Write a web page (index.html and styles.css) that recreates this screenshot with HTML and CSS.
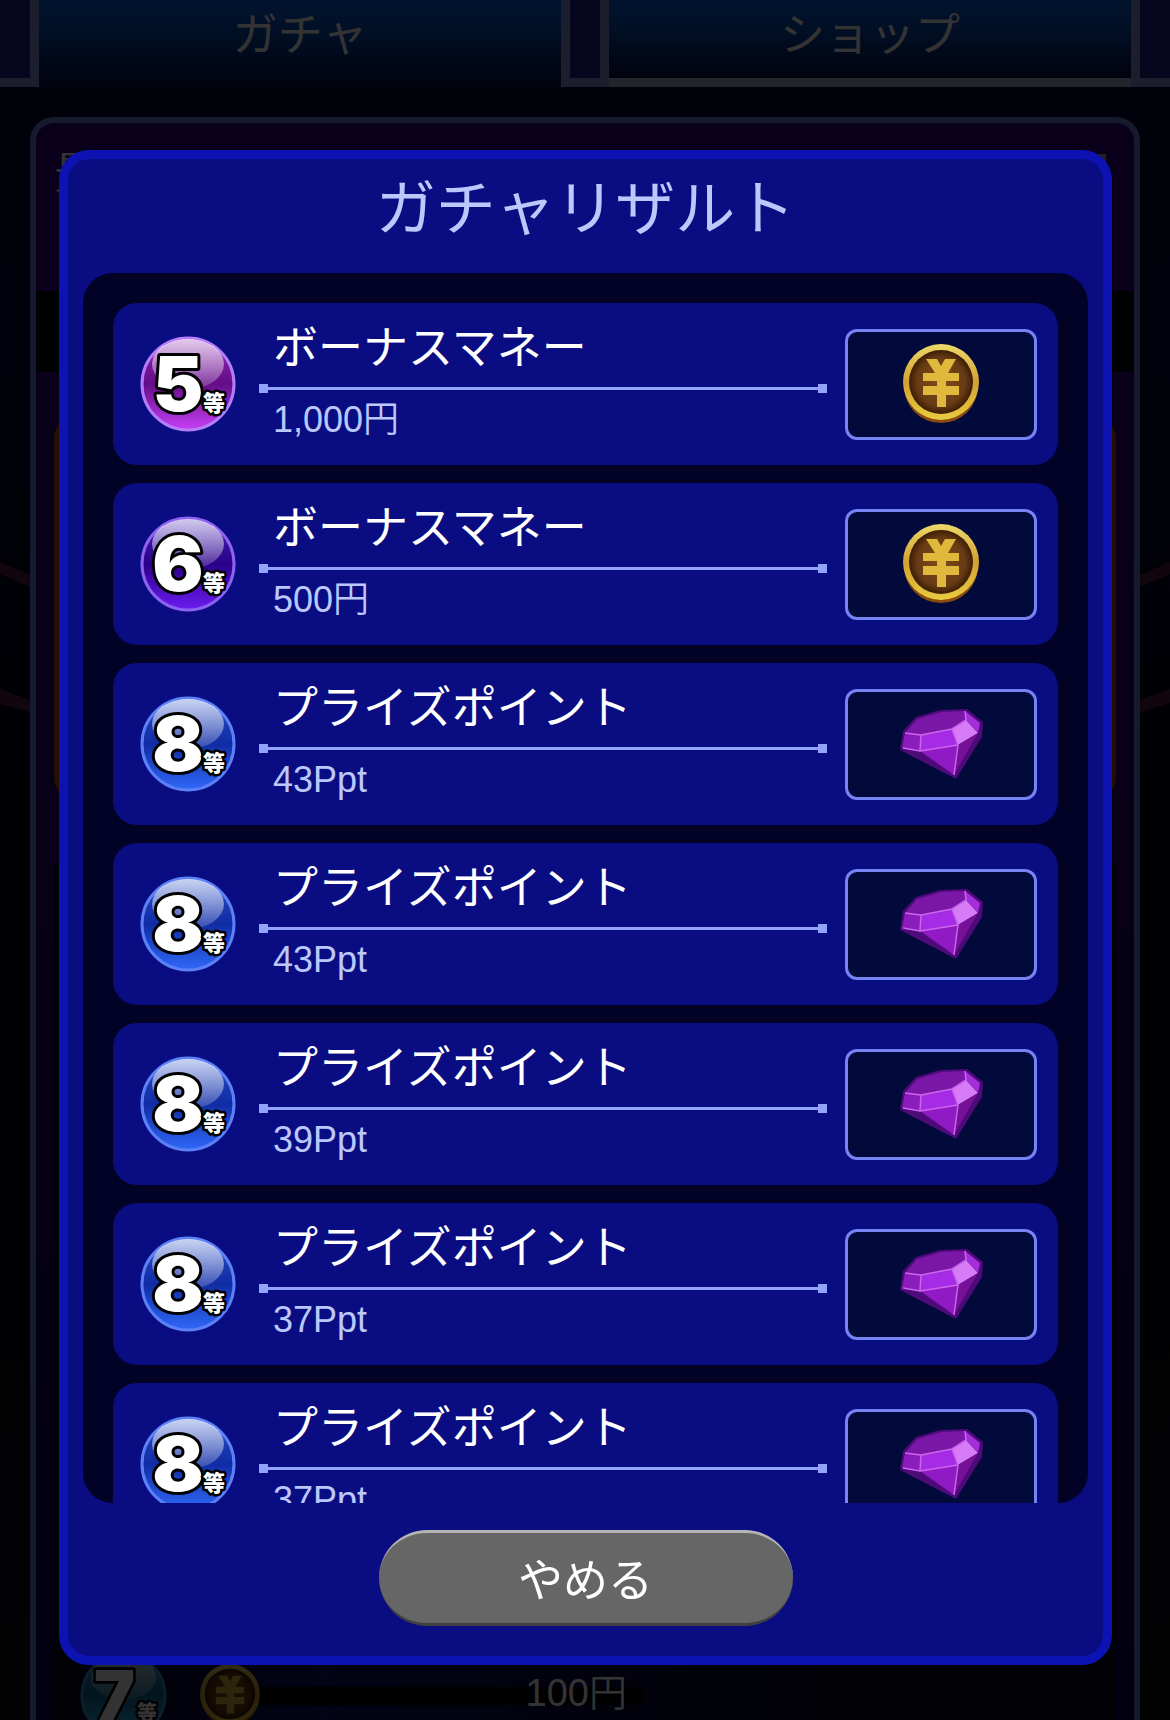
FILE: index.html
```
<!DOCTYPE html>
<html lang="ja">
<head>
    <meta charset="UTF-8">
    <meta name="viewport" content="width=device-width, initial-scale=1.0">
    <title>ガチャリザルト</title>
    <link rel="stylesheet" href="styles.css">
</head>
<body>
    <!-- Shared icons -->
    <svg class="icon-defs" aria-hidden="true">
        <defs>
            <linearGradient id="rank5" x1="0" y1="0" x2="0" y2="1">
                <stop offset="0" stop-color="#8f2ab0"/>
                <stop offset="0.5" stop-color="#650d88"/>
                <stop offset="1" stop-color="#c63ff5"/>
            </linearGradient>
            <linearGradient id="rank6" x1="0" y1="0" x2="0" y2="1">
                <stop offset="0" stop-color="#4a2ab8"/>
                <stop offset="0.5" stop-color="#2a0088"/>
                <stop offset="1" stop-color="#6c1cf2"/>
            </linearGradient>
            <linearGradient id="rank7" x1="0" y1="0" x2="0" y2="1">
                <stop offset="0" stop-color="#2f86b8"/>
                <stop offset="0.5" stop-color="#0e6c9c"/>
                <stop offset="1" stop-color="#2fc4ff"/>
            </linearGradient>
            <linearGradient id="rank8" x1="0" y1="0" x2="0" y2="1">
                <stop offset="0" stop-color="#2c50c8"/>
                <stop offset="0.5" stop-color="#102ca4"/>
                <stop offset="1" stop-color="#2f68f8"/>
            </linearGradient>
            <linearGradient id="gloss" x1="0" y1="0" x2="0" y2="1">
                <stop offset="0" stop-color="#fff" stop-opacity="0.75"/>
                <stop offset="1" stop-color="#fff" stop-opacity="0.15"/>
            </linearGradient>
            <linearGradient id="gold" x1="0" y1="0" x2="0" y2="1">
                <stop offset="0" stop-color="#ecd868"/>
                <stop offset="0.5" stop-color="#d3a032"/>
                <stop offset="1" stop-color="#e8cc40"/>
            </linearGradient>
            <radialGradient id="bronze">
                <stop offset="0" stop-color="#7e4c1b"/>
                <stop offset="0.75" stop-color="#683b14"/>
                <stop offset="1" stop-color="#3c1d05"/>
            </radialGradient>
        </defs>
        <symbol id="coin" viewBox="0 0 76 80">
            <circle cx="38" cy="42" r="37" fill="#8a4a10"/>
            <circle cx="38" cy="38" r="38" fill="url(#gold)"/>
            <circle cx="38" cy="38" r="32" fill="url(#bronze)"/>
            <path fill="#e0b83c" d="M23 15h11l4 7 4-7h11l-8 14h11v8H43v5h13v9H43v12h-9V51H20v-9h14v-5H20v-8h12z"/>
        </symbol>
        <symbol id="gem" viewBox="0 0 86 72">
            <path fill="#4d0a78" d="M2 42L5 23 18 9 42 2 69 1 85 14 84 29 58 71z"/>
            <path fill="#7a17a6" d="M7 25L19 11 43 4 67 3 68 13 55 21 23 27z"/>
            <path fill="#8c1cbc" d="M7 25L23 27 22 43 4 40z"/>
            <path fill="#a52be6" d="M23 27L54 21 60 37 22 43z"/>
            <path fill="#d77cf6" d="M54 21L68 12 80 25 60 37z"/>
            <path fill="#a42ed8" d="M67 3L82 15 80 25 68 12z"/>
            <path fill="#901ac4" d="M22 43L60 37 56 67z"/>
            <path fill="#751097" d="M60 37L80 25 56 67z"/>
            <path fill="none" stroke="#c966ec" stroke-width="1.5" stroke-linejoin="round" d="M7 25L23 27 54 21 68 12 67 3M23 27L22 43 60 37 54 21M5 40L22 43M60 37L56 67"/>
        </symbol>
    </svg>

    <!-- Page under the dialog -->
    <div class="page">
        <svg class="streaks streaks-left" viewBox="0 0 30 160" aria-hidden="true">
            <path d="M0 2L30 15V27L0 14zM0 129L30 140V152L0 144z"/>
        </svg>
        <svg class="streaks streaks-right" viewBox="0 0 30 160" aria-hidden="true">
            <path d="M0 15L30 2V14L0 27zM0 140L30 129V143L0 152z"/>
        </svg>
        <nav class="tabs">
            <span class="tab-edge"></span>
            <a class="tab active" href="#gacha">ガチャ</a>
            <span class="tab-edge"></span>
            <a class="tab" href="#shop">ショップ</a>
            <span class="tab-edge"></span>
        </nav>
        <main class="panel">
            <div class="panel-head">
                <span>景品</span>
                <span class="panel-mark"></span>
            </div>
            <div class="panel-strip"></div>
            <div class="banner"></div>
            <div class="prize-list">
                <div class="prize-row">
                    <svg class="prize-rank" viewBox="0 0 96 96">
                        <circle cx="48" cy="48" r="46" fill="url(#rank7)" stroke="#3a9cd0" stroke-width="3"/>
                        <ellipse cx="48" cy="28" rx="36" ry="25" fill="url(#gloss)"/>
                        <text class="rank-number" x="38" y="75">7</text>
                        <text class="rank-unit" x="74" y="75">等</text>
                    </svg>
                    <svg class="prize-coin"><use href="#coin"/></svg>
                    <div class="prize-bar">100円</div>
                </div>
            </div>
        </main>
    </div>

    <!-- Result dialog -->
    <div class="overlay">
        <section class="modal" role="dialog" aria-labelledby="result-title">
            <h1 class="modal-title" id="result-title">ガチャリザルト</h1>
            <ul class="result-list" id="result-list"></ul>
            <div class="modal-footer">
                <button class="close-button" type="button">やめる</button>
            </div>
        </section>
    </div>

    <script src="script.js"></script>
</body>
</html>
```
FILE: styles.css
```
:root {
    --modal-bg: #0a0d82;
    --modal-border: #0d12b3;
    --list-bg: #020226;
    --text-light: #bac8fc;
    --rule: #93a2fb;
    --jp-font: "Noto Sans CJK JP", sans-serif;
    --mixed-font: "Liberation Sans", "Noto Sans CJK JP", sans-serif;
}

* {
    box-sizing: border-box;
}

body {
    margin: 0;
    background: #000;
    font-family: var(--jp-font);
    color: #fff;
}

.icon-defs {
    position: absolute;
    width: 0;
    height: 0;
}

/* --- Page --- */
.page {
    position: relative;
    height: 100vh;
    overflow: hidden;
    display: flex;
    flex-direction: column;
    background: linear-gradient(#05052d, #08083a 20%, #00000c 50%, #101018);
}

.streaks {
    position: absolute;
    top: 560px;
    width: 30px;
    height: 160px;
    fill: #5a1e46;
}

.streaks-left {
    left: 0;
}

.streaks-right {
    right: 0;
}

.tabs {
    display: flex;
    height: 87px;
    flex-shrink: 0;
}

.tab-edge {
    flex: 0 0 48px;
    background: #20209a;
    border: 9px solid #9098e0;
    border-top: 0;
}

.tab-edge:first-child,
.tab-edge:last-child {
    flex-basis: 39px;
}

.tab-edge:first-child {
    border-left: 0;
}

.tab-edge:last-child {
    border-right: 0;
}

.tab {
    flex: 1;
    padding-bottom: 24px;
    display: flex;
    align-items: center;
    justify-content: center;
    background: linear-gradient(#0564e6, #054bb4 40%, #0a0a4b);
    color: #fff;
    font-size: 45px;
    line-height: 60px;
    text-decoration: none;
}

.tab:not(.active) {
    border-bottom: 9px solid #b0b4dc;
    padding-bottom: 15px;
}

.panel {
    flex: 1;
    margin: 30px 30px 0;
    border: 6px solid #6e82e6;
    border-bottom: 0;
    border-radius: 24px 24px 0 0;
    background: linear-gradient(#37008c, #280078 40%, #0a0050);
    overflow: hidden;
}

.panel-head {
    height: 168px;
    padding: 18px 28px 0 18px;
    display: flex;
    justify-content: space-between;
    font-size: 45px;
    line-height: 60px;
}

.panel-mark {
    width: 36px;
    height: 36px;
    margin-top: 13px;
    border: 4px solid #aaa;
}

.panel-strip {
    height: 81px;
    background: #00050f;
}

.banner {
    height: 386px;
    margin: 43px 18px 0;
    border-radius: 24px;
    background: #b44b00;
}

.prize-list {
    margin: 63px 18px 0;
    height: 900px;
    background: linear-gradient(90deg, #05051e, #081464 25%, #05051e 75%);
}

.prize-row {
    display: flex;
    align-items: center;
    padding: 788px 0 0 26px;
}

.prize-rank {
    width: 87px;
    height: 87px;
}

.prize-coin {
    position: relative;
    width: 60px;
    height: 63px;
    margin-left: 33px;
}

.prize-bar {
    width: 400px;
    height: 18px;
    margin-left: -15px;
    padding-right: 18px;
    border-radius: 0 9px 9px 0;
    background: #000;
    font-family: var(--mixed-font);
    font-size: 38px;
    font-weight: 350;
    line-height: 12px;
    text-align: right;
}

/* --- Dialog --- */
.overlay {
    position: fixed;
    inset: 0;
    display: flex;
    padding: 150px 58px 55px 59px;
    background: rgba(0, 0, 0, 0.8);
}

.modal {
    flex: 1;
    display: flex;
    flex-direction: column;
    border: 9px solid var(--modal-border);
    border-radius: 30px;
    background: var(--modal-bg);
}

.modal-title {
    margin: 0;
    padding-bottom: 24px;
    color: var(--text-light);
    font-size: 60px;
    font-weight: 400;
    line-height: 90px;
    text-align: center;
}

.result-list {
    flex: 1;
    min-height: 0;
    margin: 0 15px;
    padding: 30px;
    display: flex;
    flex-direction: column;
    gap: 18px;
    border-radius: 30px;
    background: var(--list-bg);
    list-style: none;
    overflow-y: auto;
    scrollbar-width: none;
}

.result-card {
    flex-shrink: 0;
    display: flex;
    align-items: center;
    padding: 12px 21px 18px 27px;
    border-radius: 24px;
    background: var(--modal-bg);
}

.rank {
    width: 96px;
    height: 96px;
    margin-top: 6px;
}

.rank-number,
.rank-unit {
    fill: #fff;
    stroke: #000;
    stroke-linejoin: round;
    paint-order: stroke;
    font-weight: 900;
    text-anchor: middle;
}

.rank-number {
    stroke-width: 6px;
    font-family: Inter, sans-serif;
    font-size: 76px;
}

.rank-unit {
    stroke-width: 5px;
    font-family: var(--jp-font);
    font-size: 22px;
}

.result-body {
    flex: 1;
    margin: 0 18px 0 23px;
}

.result-name {
    margin: 0 0 9px;
    padding-left: 14px;
    font-size: 45px;
    font-weight: 400;
    line-height: 60px;
}

.result-rule {
    display: flex;
    align-items: center;
    justify-content: space-between;
    height: 9px;
    background: linear-gradient(var(--rule), var(--rule)) center / 100% 3px no-repeat;
}

.result-rule::before,
.result-rule::after {
    content: '';
    width: 9px;
    height: 9px;
    background: var(--rule);
}

.result-amount {
    margin: 0;
    padding-left: 14px;
    color: var(--text-light);
    font-family: var(--mixed-font);
    font-size: 36px;
    font-weight: 350;
    line-height: 54px;
}

.result-item {
    width: 192px;
    height: 111px;
    margin-top: 6px;
    display: flex;
    align-items: center;
    justify-content: center;
    border: 3px solid #7583f5;
    border-radius: 12px;
    background: #010a3a;
}

.item-coin {
    width: 76px;
    height: 80px;
}

.item-gem {
    width: 86px;
    height: 72px;
}

.modal-footer {
    padding: 27px 0 30px;
    text-align: center;
}

.close-button {
    display: block;
    width: 40%;
    height: 96px;
    margin: 0 auto;
    border: 0 solid;
    border-width: 3px 0;
    border-color: #b4b4b4 #666 #404040;
    border-radius: 48px;
    background: #666;
    color: #fff;
    font-family: var(--jp-font);
    font-size: 45px;
    line-height: 60px;
    cursor: pointer;
}
```
FILE: script.js
```
const results = [
    { rank: 5, name: 'ボーナスマネー', amount: '1,000円', item: 'coin' },
    { rank: 6, name: 'ボーナスマネー', amount: '500円', item: 'coin' },
    { rank: 8, name: 'プライズポイント', amount: '43Ppt', item: 'gem' },
    { rank: 8, name: 'プライズポイント', amount: '43Ppt', item: 'gem' },
    { rank: 8, name: 'プライズポイント', amount: '39Ppt', item: 'gem' },
    { rank: 8, name: 'プライズポイント', amount: '37Ppt', item: 'gem' },
    { rank: 8, name: 'プライズポイント', amount: '37Ppt', item: 'gem' },
];

const rankBorders = { 5: '#b57cf8', 6: '#8d62f0', 8: '#5c80f6' };

const list = document.getElementById('result-list');

list.innerHTML = results.map((result) => `
    <li class="result-card">
        <svg class="rank" viewBox="0 0 96 96">
            <circle cx="48" cy="48" r="46" fill="url(#rank${result.rank})" stroke="${rankBorders[result.rank]}" stroke-width="3"/>
            <ellipse cx="48" cy="28" rx="36" ry="25" fill="url(#gloss)"/>
            <text class="rank-number" x="38" y="75">${result.rank}</text>
            <text class="rank-unit" x="74" y="75">等</text>
        </svg>
        <div class="result-body">
            <h2 class="result-name">${result.name}</h2>
            <div class="result-rule"></div>
            <p class="result-amount">${result.amount}</p>
        </div>
        <div class="result-item">
            <svg class="item-${result.item}"><use href="#${result.item}"/></svg>
        </div>
    </li>
`).join('');

// Close the dialog
document.querySelector('.close-button').addEventListener('click', () => {
    document.querySelector('.overlay').style.display = 'none';
});
```
